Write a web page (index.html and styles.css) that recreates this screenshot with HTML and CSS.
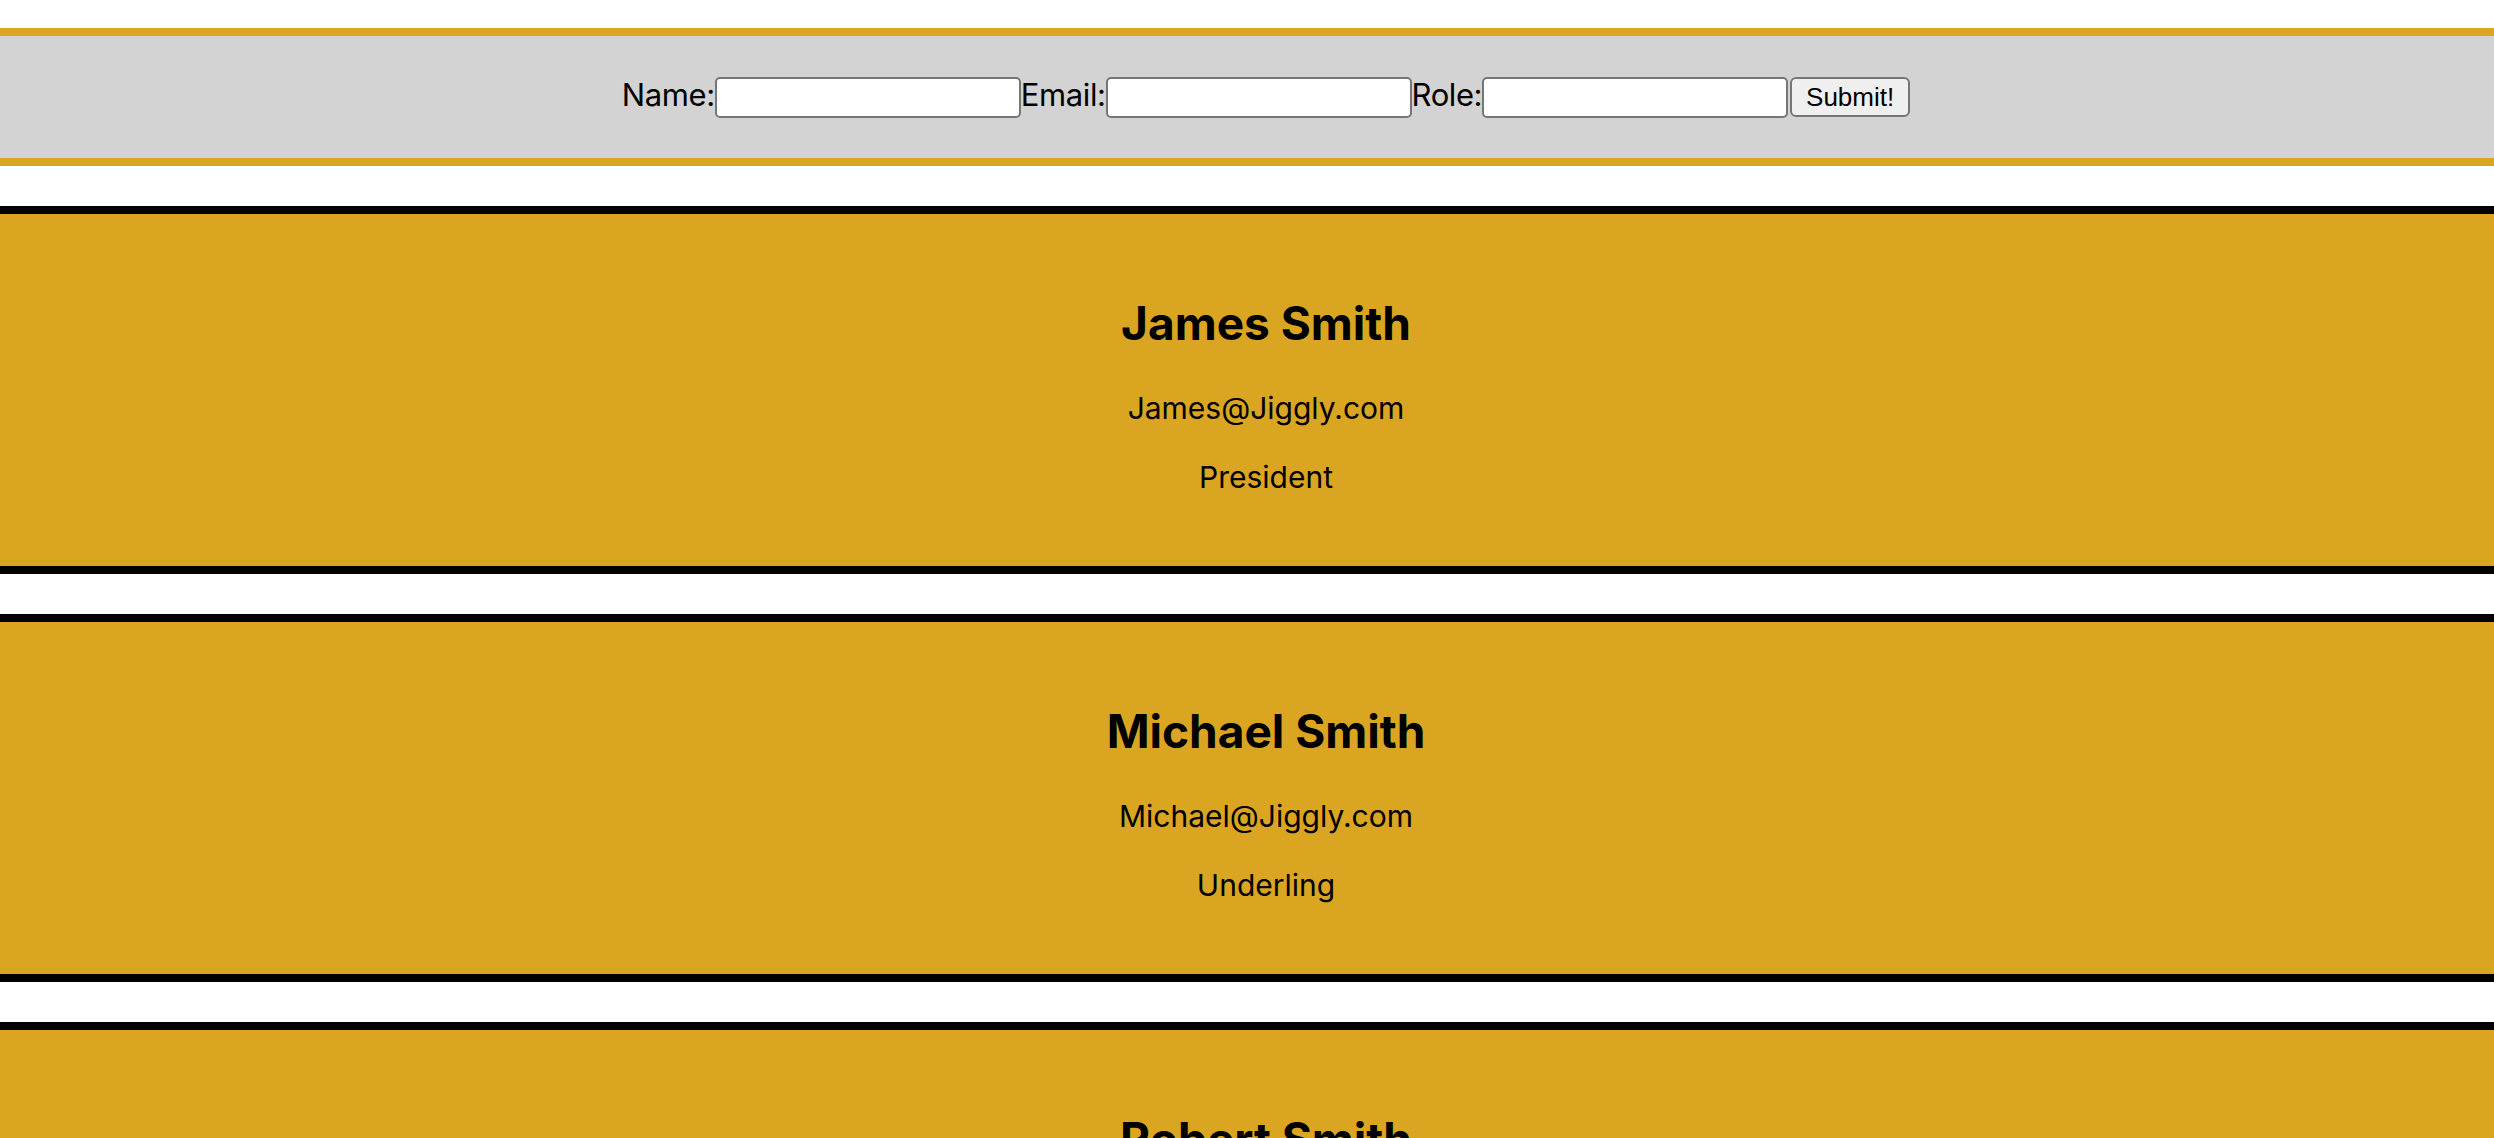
FILE: index.html
```html
<!DOCTYPE html>
<html>
<head>
<meta charset="utf-8">
<link rel="stylesheet" href="styles.css">
</head>
<body>
<form class="entry-form">
  <label class="field-label" for="name">Name:</label><input class="field-input" id="name" type="text"><label class="field-label" for="email">Email:</label><input class="field-input" id="email" type="text"><label class="field-label" for="role">Role:</label><input class="field-input" id="role" type="text"><button class="submit-btn" type="button">Submit!</button>
</form>
<section class="card">
  <h2 class="card-name">James Smith</h2>
  <p class="card-line">James@Jiggly.com</p>
  <p class="card-line">President</p>
</section>
<section class="card">
  <h2 class="card-name">Michael Smith</h2>
  <p class="card-line">Michael@Jiggly.com</p>
  <p class="card-line">Underling</p>
</section>
<section class="card">
  <h2 class="card-name">Robert Smith</h2>
  <p class="card-line">Robert@Jiggly.com</p>
  <p class="card-line">Peon</p>
</section>
</body>
</html>
```
FILE: styles.css
```css
html, body {
  margin: 0;
  padding: 0;
  background: #ffffff;
  overflow: hidden;
}
body {
  font-family: Inter, "Noto Sans", sans-serif;
  color: #000;
}
.entry-form {
  margin: 28px 0 0 0;
  height: 122px;
  background: #d3d3d3;
  border-top: 8px solid #daa520;
  border-bottom: 8px solid #daa520;
  display: flex;
  align-items: center;
  justify-content: center;
  padding-left: 38px;
}
.field-label {
  font-family: Inter, sans-serif;
  font-size: 31px;
  line-height: 38px;
  margin-top: -4px;
  letter-spacing: -0.4px;
}
.field-input {
  box-sizing: border-box;
  width: 306px;
  height: 41px;
  margin: 0;
  border: 2px solid #767676;
  border-radius: 5px;
  background: #fff;
}
.submit-btn {
  box-sizing: border-box;
  width: 120px;
  height: 40px;
  margin: 0 0 0 2px;
  border: 2px solid #767676;
  border-radius: 6px;
  background: #efefef;
  font-family: "Liberation Sans", Arial, sans-serif;
  font-size: 26px;
  color: #000;
  padding: 0;
}
.card {
  margin-top: 40px;
  background: #daa520;
  border-top: 8px solid #000;
  border-bottom: 8px solid #000;
  padding: 40px 0 40px 38px;
  text-align: center;
}
.card-name {
  margin: 40px 0 36px 0;
  font-size: 46px;
  line-height: 58px;
  font-weight: 700;
}
.card-line {
  margin: 29px 0;
  font-size: 30px;
  line-height: 40px;
}
```
